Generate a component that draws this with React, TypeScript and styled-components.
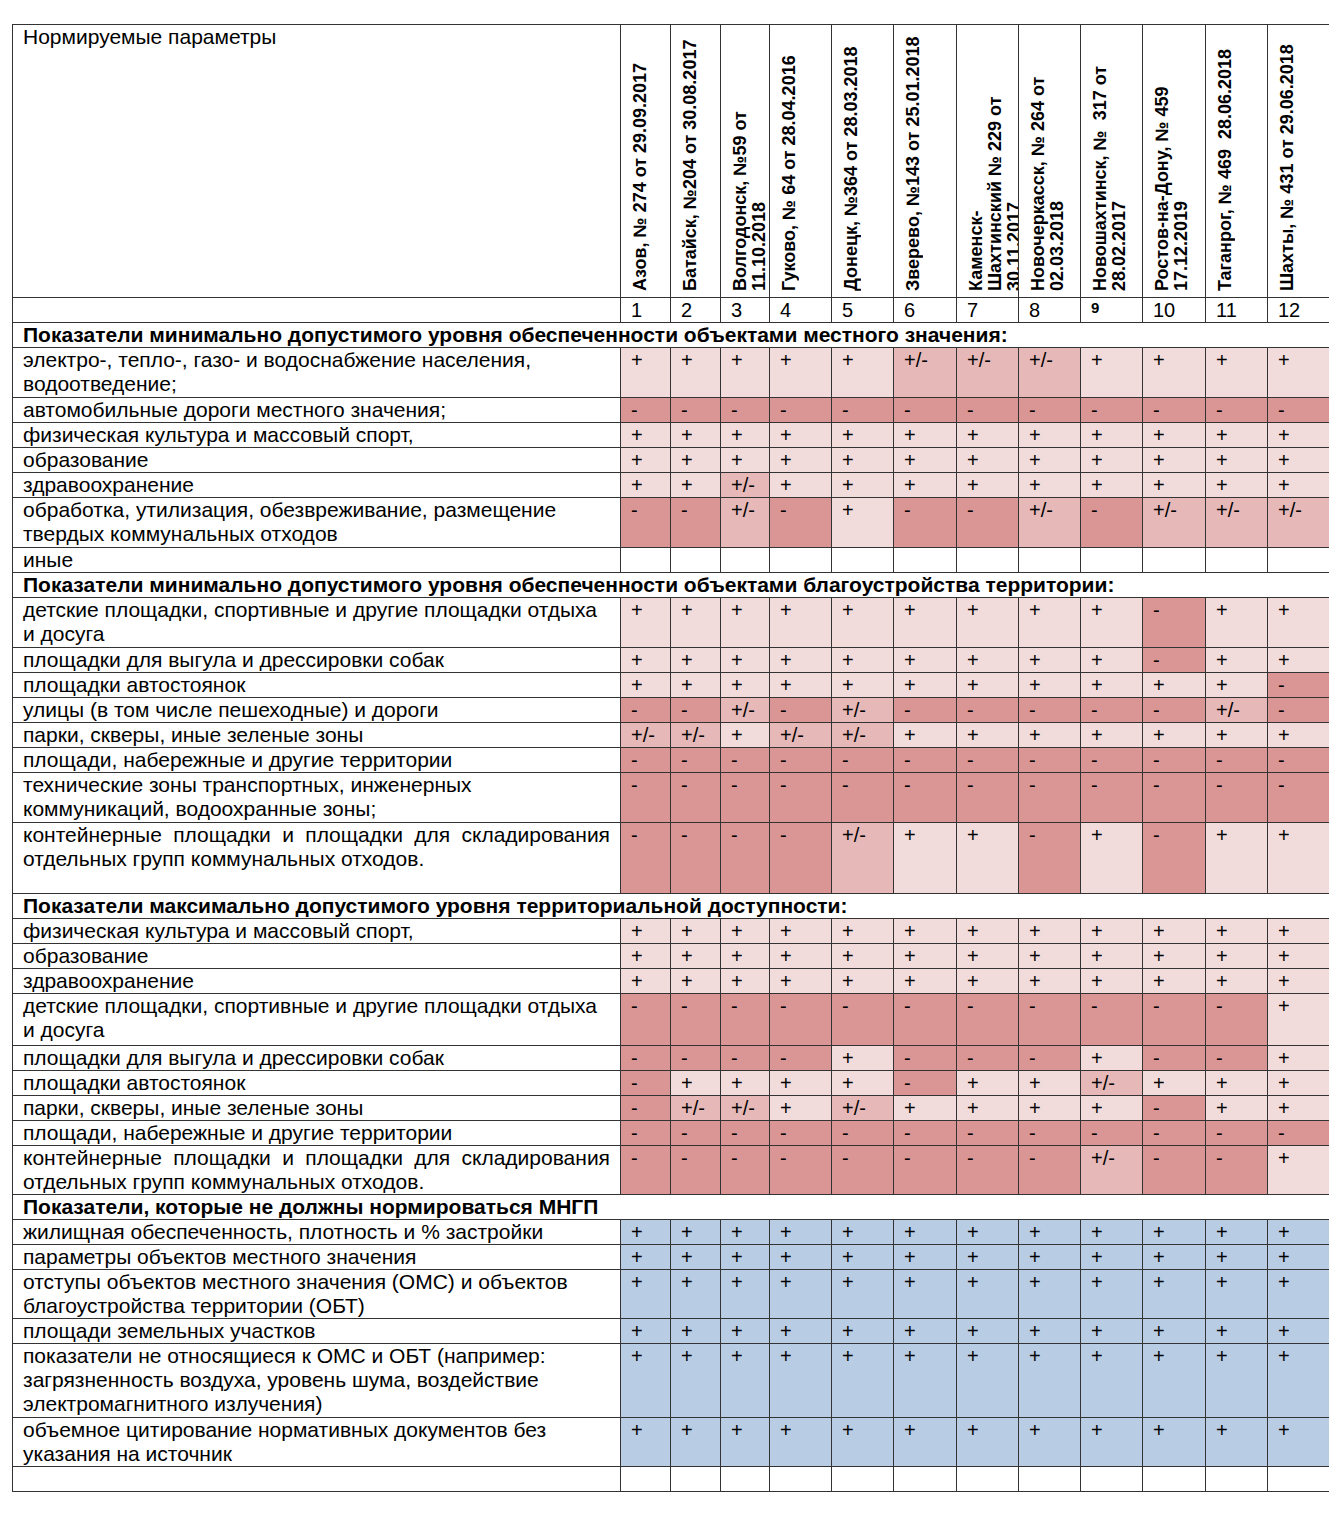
import React from 'react';
import styled, { createGlobalStyle } from 'styled-components';

const GlobalStyle = createGlobalStyle`
  html, body {
    margin: 0;
    padding: 0;
    background: #ffffff;
  }
  body {
    font-family: "Liberation Sans", Arial, sans-serif;
    color: #000000;
  }
`;

const Page = styled.div`
  padding: 24px 0 0 12px;
`;

const Table = styled.table`
  border-collapse: collapse;
  table-layout: fixed;
  width: 1317px;
  font-size: 21px;
  line-height: 24px;
`;

const HeadCell = styled.td`
  border: 1px solid #333333;
  padding: 0 10px;
  vertical-align: top;
`;

const CityCell = styled.td`
  border: 1px solid #333333;
  padding: 0 0 0 10px;
  vertical-align: top;
`;

const CityText = styled.div`
  writing-mode: vertical-rl;
  text-orientation: sideways;
  transform: rotate(180deg);
  box-sizing: border-box;
  width: 100%;
  height: 272px;
  padding-top: 6px;
  font-size: 18px;
  font-weight: bold;
  line-height: 19px;
  white-space: pre;
  overflow: hidden;
`;

const NumCell = styled.td<{ $bold?: boolean }>`
  border: 1px solid #333333;
  padding: 0 0 0 10px;
  vertical-align: top;
  height: 24px;
  font-size: ${(p) => (p.$bold ? '15px' : '20px')};
  font-weight: ${(p) => (p.$bold ? 'bold' : 'normal')};
  line-height: ${(p) => (p.$bold ? '20px' : '24px')};
`;

const SectionCell = styled.td`
  border: 1px solid #333333;
  padding: 0 10px;
  font-weight: bold;
  white-space: nowrap;
`;

const LabelCell = styled.td<{ $justify?: boolean; $h?: number }>`
  border: 1px solid #333333;
  padding: 0 10px;
  vertical-align: top;
  text-align: ${(p) => (p.$justify ? 'justify' : 'left')};
  height: ${(p) => (p.$h ? `${p.$h}px` : '24px')};
`;

const MarkCell = styled.td<{ $fill: string }>`
  border: 1px solid #333333;
  padding: 0 0 0 10px;
  vertical-align: top;
  font-size: 20px;
  background: ${(p) => p.$fill};
`;

const cities: string[][] = [
  ['Азов, № 274 от 29.09.2017'],
  ['Батайск, №204 от 30.08.2017'],
  ['Волгодонск, №59 от', '11.10.2018'],
  ['Гуково, № 64 от 28.04.2016'],
  ['Донецк, №364 от 28.03.2018'],
  ['Зверево, №143 от 25.01.2018'],
  ['Каменск-', 'Шахтинский № 229 от', '30.11.2017'],
  ['Новочеркасск, № 264 от', '02.03.2018'],
  ['Новошахтинск, №  317 от', '28.02.2017'],
  ['Ростов-на-Дону, № 459', '17.12.2019'],
  ['Таганрог, № 469  28.06.2018'],
  ['Шахты, № 431 от 29.06.2018'],
];

const widths = [608, 50, 50, 49, 62, 62, 63, 62, 62, 62, 63, 62, 62];

const ALL_PLUS = '+ + + + + + + + + + + +';
const ALL_MINUS = '- - - - - - - - - - - -';
const EMPTY = '';

type Row = {
  label: string;
  vals: string;
  justify?: boolean;
  h?: number;
};

type Section = {
  title: string;
  blue?: boolean;
  rows: Row[];
};

// h — высота ячейки, когда строка выше одной строки текста
const sections: Section[] = [
  {
    title: 'Показатели минимально допустимого уровня обеспеченности объектами местного значения:',
    rows: [
      { label: 'электро-, тепло-, газо- и водоснабжение населения, водоотведение;', vals: '+ + + + + +/- +/- +/- + + + +', h: 49 },
      { label: 'автомобильные дороги местного значения;', vals: ALL_MINUS },
      { label: 'физическая культура и массовый спорт,', vals: ALL_PLUS },
      { label: 'образование', vals: ALL_PLUS },
      { label: 'здравоохранение', vals: '+ + +/- + + + + + + + + +' },
      {
        label: 'обработка, утилизация, обезвреживание, размещение твердых коммунальных отходов',
        vals: '- - +/- - + - - +/- - +/- +/- +/-',
        h: 49,
      },
      { label: 'иные', vals: EMPTY },
    ],
  },
  {
    title: 'Показатели минимально допустимого уровня обеспеченности объектами благоустройства территории:',
    rows: [
      { label: 'детские площадки, спортивные и другие площадки отдыха и досуга', vals: '+ + + + + + + + + - + +', h: 49 },
      { label: 'площадки для выгула и дрессировки собак', vals: '+ + + + + + + + + - + +' },
      { label: 'площадки автостоянок', vals: '+ + + + + + + + + + + -' },
      { label: 'улицы (в том числе пешеходные) и дороги', vals: '- - +/- - +/- - - - - - +/- -' },
      { label: 'парки, скверы, иные зеленые зоны', vals: '+/- +/- + +/- +/- + + + + + + +' },
      { label: 'площади, набережные и другие территории', vals: ALL_MINUS },
      { label: 'технические зоны транспортных, инженерных коммуникаций, водоохранные зоны;', vals: ALL_MINUS, h: 49 },
      {
        label: 'контейнерные площадки и площадки для складирования отдельных групп коммунальных отходов.',
        vals: '- - - - +/- + + - + - + +',
        justify: true,
        h: 70,
      },
    ],
  },
  {
    title: 'Показатели максимально допустимого уровня территориальной доступности:',
    rows: [
      { label: 'физическая культура и массовый спорт,', vals: ALL_PLUS },
      { label: 'образование', vals: ALL_PLUS },
      { label: 'здравоохранение', vals: ALL_PLUS },
      { label: 'детские площадки, спортивные и другие площадки отдыха и досуга', vals: '- - - - - - - - - - - +', h: 51 },
      { label: 'площадки для выгула и дрессировки собак', vals: '- - - - + - - - + - - +' },
      { label: 'площадки автостоянок', vals: '- + + + + - + + +/- + + +' },
      { label: 'парки, скверы, иные зеленые зоны', vals: '- +/- +/- + +/- + + + + - + +' },
      { label: 'площади, набережные и другие территории', vals: ALL_MINUS },
      {
        label: 'контейнерные площадки и площадки для складирования отдельных групп коммунальных отходов.',
        vals: '- - - - - - - - +/- - - +',
        justify: true,
        h: 48,
      },
    ],
  },
  {
    title: 'Показатели, которые не должны нормироваться МНГП',
    blue: true,
    rows: [
      { label: 'жилищная обеспеченность, плотность и % застройки', vals: ALL_PLUS },
      { label: 'параметры объектов местного значения', vals: ALL_PLUS },
      { label: 'отступы объектов местного значения (ОМС) и объектов благоустройства территории (ОБТ)', vals: ALL_PLUS, h: 48 },
      { label: 'площади земельных участков', vals: ALL_PLUS },
      {
        label: 'показатели не относящиеся к ОМС и ОБТ (например: загрязненность воздуха, уровень шума, воздействие электромагнитного излучения)',
        vals: ALL_PLUS,
        h: 73,
      },
      { label: 'объемное цитирование нормативных документов без указания на источник', vals: ALL_PLUS, h: 48 },
      { label: '', vals: EMPTY },
    ],
  },
];

const fillFor = (v: string, blue?: boolean) => {
  if (!v) return '#ffffff';
  if (blue) return '#b8cce4';
  if (v === '+') return '#f2dcdb';
  if (v === '+/-') return '#e6b8b7';
  return '#da9694';
};

const ParamsTable: React.FC = () => {
  return (
    <Table>
      <colgroup>
        {widths.map((w, i) => (
          <col key={i} style={{ width: w }} />
        ))}
      </colgroup>
      <tbody>
        <tr>
          <HeadCell>Нормируемые параметры</HeadCell>
          {cities.map((c, i) => (
            <CityCell key={i}>
              <CityText>{c.join('\n')}</CityText>
            </CityCell>
          ))}
        </tr>
        <tr>
          <NumCell />
          {cities.map((_, i) => (
            <NumCell key={i} $bold={i === 8}>
              {i + 1}
            </NumCell>
          ))}
        </tr>
        {sections.map((s) => (
          <React.Fragment key={s.title}>
            <tr>
              <SectionCell colSpan={13}>{s.title}</SectionCell>
            </tr>
            {s.rows.map((r, ri) => {
              const vals = r.vals ? r.vals.split(' ') : Array(12).fill('');
              return (
                <tr key={ri}>
                  <LabelCell $justify={r.justify} $h={r.h}>
                    {r.label}
                  </LabelCell>
                  {vals.map((v, vi) => (
                    <MarkCell key={vi} $fill={fillFor(v, s.blue)}>
                      {v}
                    </MarkCell>
                  ))}
                </tr>
              );
            })}
          </React.Fragment>
        ))}
      </tbody>
    </Table>
  );
};

const App: React.FC = () => {
  return (
    <>
      <GlobalStyle />
      <Page>
        <ParamsTable />
      </Page>
    </>
  );
};

export default App;
